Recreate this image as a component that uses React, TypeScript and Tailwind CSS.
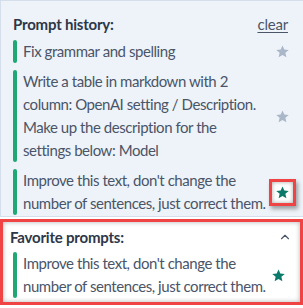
import { ChevronUp } from "lucide-react";

type Prompt = { id: number; text: string; fav: boolean };

const history: Prompt[] = [
  { id: 1, text: "Fix grammar and spelling", fav: false },
  {
    id: 2,
    text: "Write a table in markdown with 2\ncolumn: OpenAI setting / Description.\nMake up the description for the\nsettings below: Model",
    fav: false,
  },
  {
    id: 3,
    text: "Improve this text, don't change the\nnumber of sentences, just correct them.",
    fav: true,
  },
];

function Star({ active }: { active: boolean }) {
  return (
    <svg viewBox="0 0 24 24" className="h-[15px] w-[15px]" fill={active ? "#0b7a6a" : "#a9b7c9"}>
      <path d="M12 2.2l2.9 6.6 7.1.6-5.4 4.7 1.6 7-6.2-3.7-6.2 3.7 1.6-7L2 9.4l7.1-.6z" />
    </svg>
  );
}

function PromptRow({ prompt, highlight }: { prompt: Prompt; highlight?: boolean }) {
  return (
    <div className="flex items-center">
      <div className="flex min-w-0 flex-1 items-stretch">
        <div className="w-[4px] shrink-0 rounded-full bg-[#1fa874]" />
        <p className="whitespace-pre pl-[6px] text-[15px] leading-[23px] tracking-[-0.45px] text-[#4a5568]">
          {prompt.text}
        </p>
      </div>
      {highlight ? (
        <div className="flex h-[27px] w-[27px] shrink-0 items-center justify-center border-[3px] border-[#f04444] bg-white shadow-[inset_0_0_4px_rgba(0,0,0,0.35),2px_3px_4px_rgba(0,0,0,0.35)]">
          <Star active={prompt.fav} />
        </div>
      ) : (
        <div className="flex w-[27px] shrink-0 justify-center">
          <Star active={prompt.fav} />
        </div>
      )}
    </div>
  );
}

export default function App() {
  return (
    <div className="h-[308px] w-[303px] overflow-hidden bg-white font-['Lato',sans-serif]">
      <div className="h-[217px] border-b border-l border-t border-[#d5dfeb] bg-[#eef3f9] pl-[12px] pr-[7px] pt-[12px]">
        <div className="flex h-[22px] items-center justify-between pr-[8px]">
          <h2 className="text-[15px] font-bold tracking-[-0.2px] text-[#2d3748]">Prompt history:</h2>
          <button className="text-[15px] tracking-[-0.2px] text-[#4a5568] underline underline-offset-2">clear</button>
        </div>
        <div className="mt-[5px] flex flex-col gap-[7px]">
          {history.map((p) => (
            <PromptRow key={p.id} prompt={p} highlight={p.id === 3} />
          ))}
        </div>
      </div>
      <div className="mt-[2px] h-[86px] border-[3px] border-[#f04444] bg-white px-[7px] pt-[4px] shadow-[inset_0_0_5px_rgba(0,0,0,0.3)]">
        <div className="flex h-[22px] items-center justify-between">
          <h2 className="text-[15px] font-bold tracking-[-0.2px] text-[#2d3748]">Favorite prompts:</h2>
          <ChevronUp className="mr-[1px] h-[14px] w-[14px] text-[#4a5568]" strokeWidth={2} />
        </div>
        <div className="mt-[4px] pl-[3px] pr-[1px]">
          <PromptRow prompt={history[2]} />
        </div>
      </div>
    </div>
  );
}
